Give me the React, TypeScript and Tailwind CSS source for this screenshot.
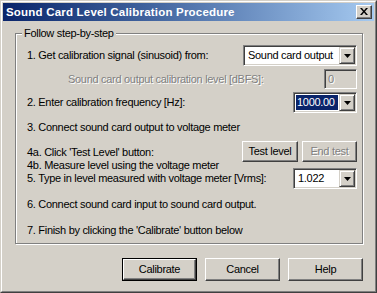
import React from 'react';

interface ComboProps {
  width: string;
  value: string;
  selected?: boolean;
}

const raised =
  'border border-t-white border-l-white border-r-[#404040] border-b-[#404040] shadow-[inset_-1px_-1px_0_#808080]';

const sunken =
  'border border-t-[#808080] border-l-[#808080] border-r-white border-b-white shadow-[inset_1px_1px_0_#404040,inset_-1px_-1px_0_#d4d0c8]';

const etched = 'text-[#808080] [text-shadow:1px_1px_0_#ffffff]';

function ArrowButton() {
  return (
    <div className="w-[16px] h-full shrink-0 bg-[#d4d0c8] flex items-center justify-center border border-t-[#d4d0c8] border-l-[#d4d0c8] border-r-[#404040] border-b-[#404040] shadow-[inset_1px_1px_0_#ffffff,inset_-1px_-1px_0_#808080]">
      <svg width="7" height="4" viewBox="0 0 7 4">
        <path d="M0 0h7L3.5 4z" fill="#000" />
      </svg>
    </div>
  );
}

function Combo({ width, value, selected }: ComboProps) {
  return (
    <div className={`${width} h-[21px] shrink-0 bg-white flex p-px ${sunken}`}>
      <div className="flex-1 flex items-center p-px min-w-0 overflow-hidden">
        <span
          className={
            selected
              ? 'w-full h-full bg-[#0a246a] text-white flex items-center pl-px'
              : 'pl-[2px]'
          }
        >
          {value}
        </span>
      </div>
      <ArrowButton />
    </div>
  );
}

function PushButton({
  label,
  width,
  disabled,
  isDefault,
  height = 'h-[21px]',
}: {
  label: string;
  width: string;
  disabled?: boolean;
  isDefault?: boolean;
  height?: string;
}) {
  const inner = (
    <div className={`w-full h-full flex items-center justify-center bg-[#d4d0c8] ${raised}`}>
      <span className={disabled ? etched : ''}>{label}</span>
    </div>
  );
  if (isDefault) {
    return <div className={`${width} ${height} shrink-0 border border-black`}>{inner}</div>;
  }
  return <div className={`${width} ${height} shrink-0`}>{inner}</div>;
}

function CloseButton() {
  return (
    <div className="w-[16px] h-[14px] bg-[#d4d0c8] flex items-center justify-center border border-t-white border-l-white border-r-[#404040] border-b-[#404040] shadow-[inset_-1px_-1px_0_#808080]">
      <svg width="8" height="7" viewBox="0 0 8 7" className="-mt-px">
        <path d="M0 0h2l2 2.5L6 0h2L5 3.5 8 7H6L4 4.5 2 7H0l3-3.5z" fill="#000" />
      </svg>
    </div>
  );
}

export default function App() {
  return (
    <div className="w-[377px] h-[293px] bg-[#d4d0c8] text-black text-[11px] leading-[13px] tracking-[-0.3px] whitespace-nowrap font-['Liberation_Sans',Arial,sans-serif] select-none">
      <div className="w-full h-full border border-t-[#d4d0c8] border-l-[#d4d0c8] border-r-[#404040] border-b-[#404040]">
        <div className="w-full h-full border border-t-white border-l-white border-r-[#808080] border-b-[#808080] p-px flex flex-col">
          {/* title bar */}
          <div className="h-[18px] flex items-center bg-linear-to-r from-[#0a246a] to-[#a6caf0] pl-[3px] pr-[2px]">
            <span className="flex-1 text-white font-bold text-[11.5px] tracking-[0.2px]">
              Sound Card Level Calibration Procedure
            </span>
            <CloseButton />
          </div>

          {/* group box */}
          <div className="relative ml-[12px] mt-[12px] w-[348px] h-[211px] border border-[#808080] shadow-[inset_1px_1px_0_#ffffff,1px_1px_0_#ffffff] pl-[11px] pr-[5px] pt-[11px] flex flex-col">
            <span className="absolute left-[6px] top-[-7px] px-[2px] bg-[#d4d0c8]">Follow step-by-step</span>

            <div className="h-[21px] flex items-center justify-between">
              <span>1. Get calibration signal (sinusoid) from:</span>
              <Combo width="w-[114px]" value="Sound card output" />
            </div>

            <div className="mt-[3px] h-[20px] flex items-center justify-between">
              <span className={`ml-[41px] ${etched}`}>Sound card output calibration level [dBFS]:</span>
              <div className={`w-[33px] h-full shrink-0 bg-[#d4d0c8] flex items-center pl-[3px] ${sunken}`}>
                <span className={etched}>0</span>
              </div>
            </div>

            <div className="mt-[3px] h-[21px] flex items-center justify-between">
              <span>2. Enter calibration frequency [Hz]:</span>
              <Combo width="w-[64px]" value="1000.00" selected />
            </div>

            <div className="mt-[8px] h-[13px] flex items-center">
              <span>3. Connect sound card output to voltage meter</span>
            </div>

            <div className="mt-[7px] flex justify-between">
              <div className="flex-1 min-w-0 pt-[5px] flex flex-col">
                <span>4a. Click 'Test Level' button:</span>
                <span>4b. Measure level using the voltage meter</span>
                <span>5. Type in level measured with voltage meter [Vrms]:</span>
              </div>
              <div className="shrink-0 flex flex-col items-end">
                <div className="flex gap-[4px]">
                  <PushButton label="Test level" width="w-[56px]" />
                  <PushButton label="End test" width="w-[55px]" disabled />
                </div>
                <div className="mt-[6px]">
                  <Combo width="w-[64px]" value="1.022" />
                </div>
              </div>
            </div>

            <div className="mt-[9px] h-[13px] flex items-center">
              <span>6. Connect sound card input to sound card output.</span>
            </div>

            <div className="mt-[13px] h-[13px] flex items-center">
              <span>7. Finish by clicking the 'Calibrate' button below</span>
            </div>
          </div>

          {/* dialog buttons */}
          <div className="ml-[12px] mt-[14px] w-[348px] flex justify-end gap-[8px]">
            <PushButton label="Calibrate" width="w-[75px]" height="h-[23px]" isDefault />
            <PushButton label="Cancel" width="w-[75px]" height="h-[23px]" />
            <PushButton label="Help" width="w-[75px]" height="h-[23px]" />
          </div>
        </div>
      </div>
    </div>
  );
}
